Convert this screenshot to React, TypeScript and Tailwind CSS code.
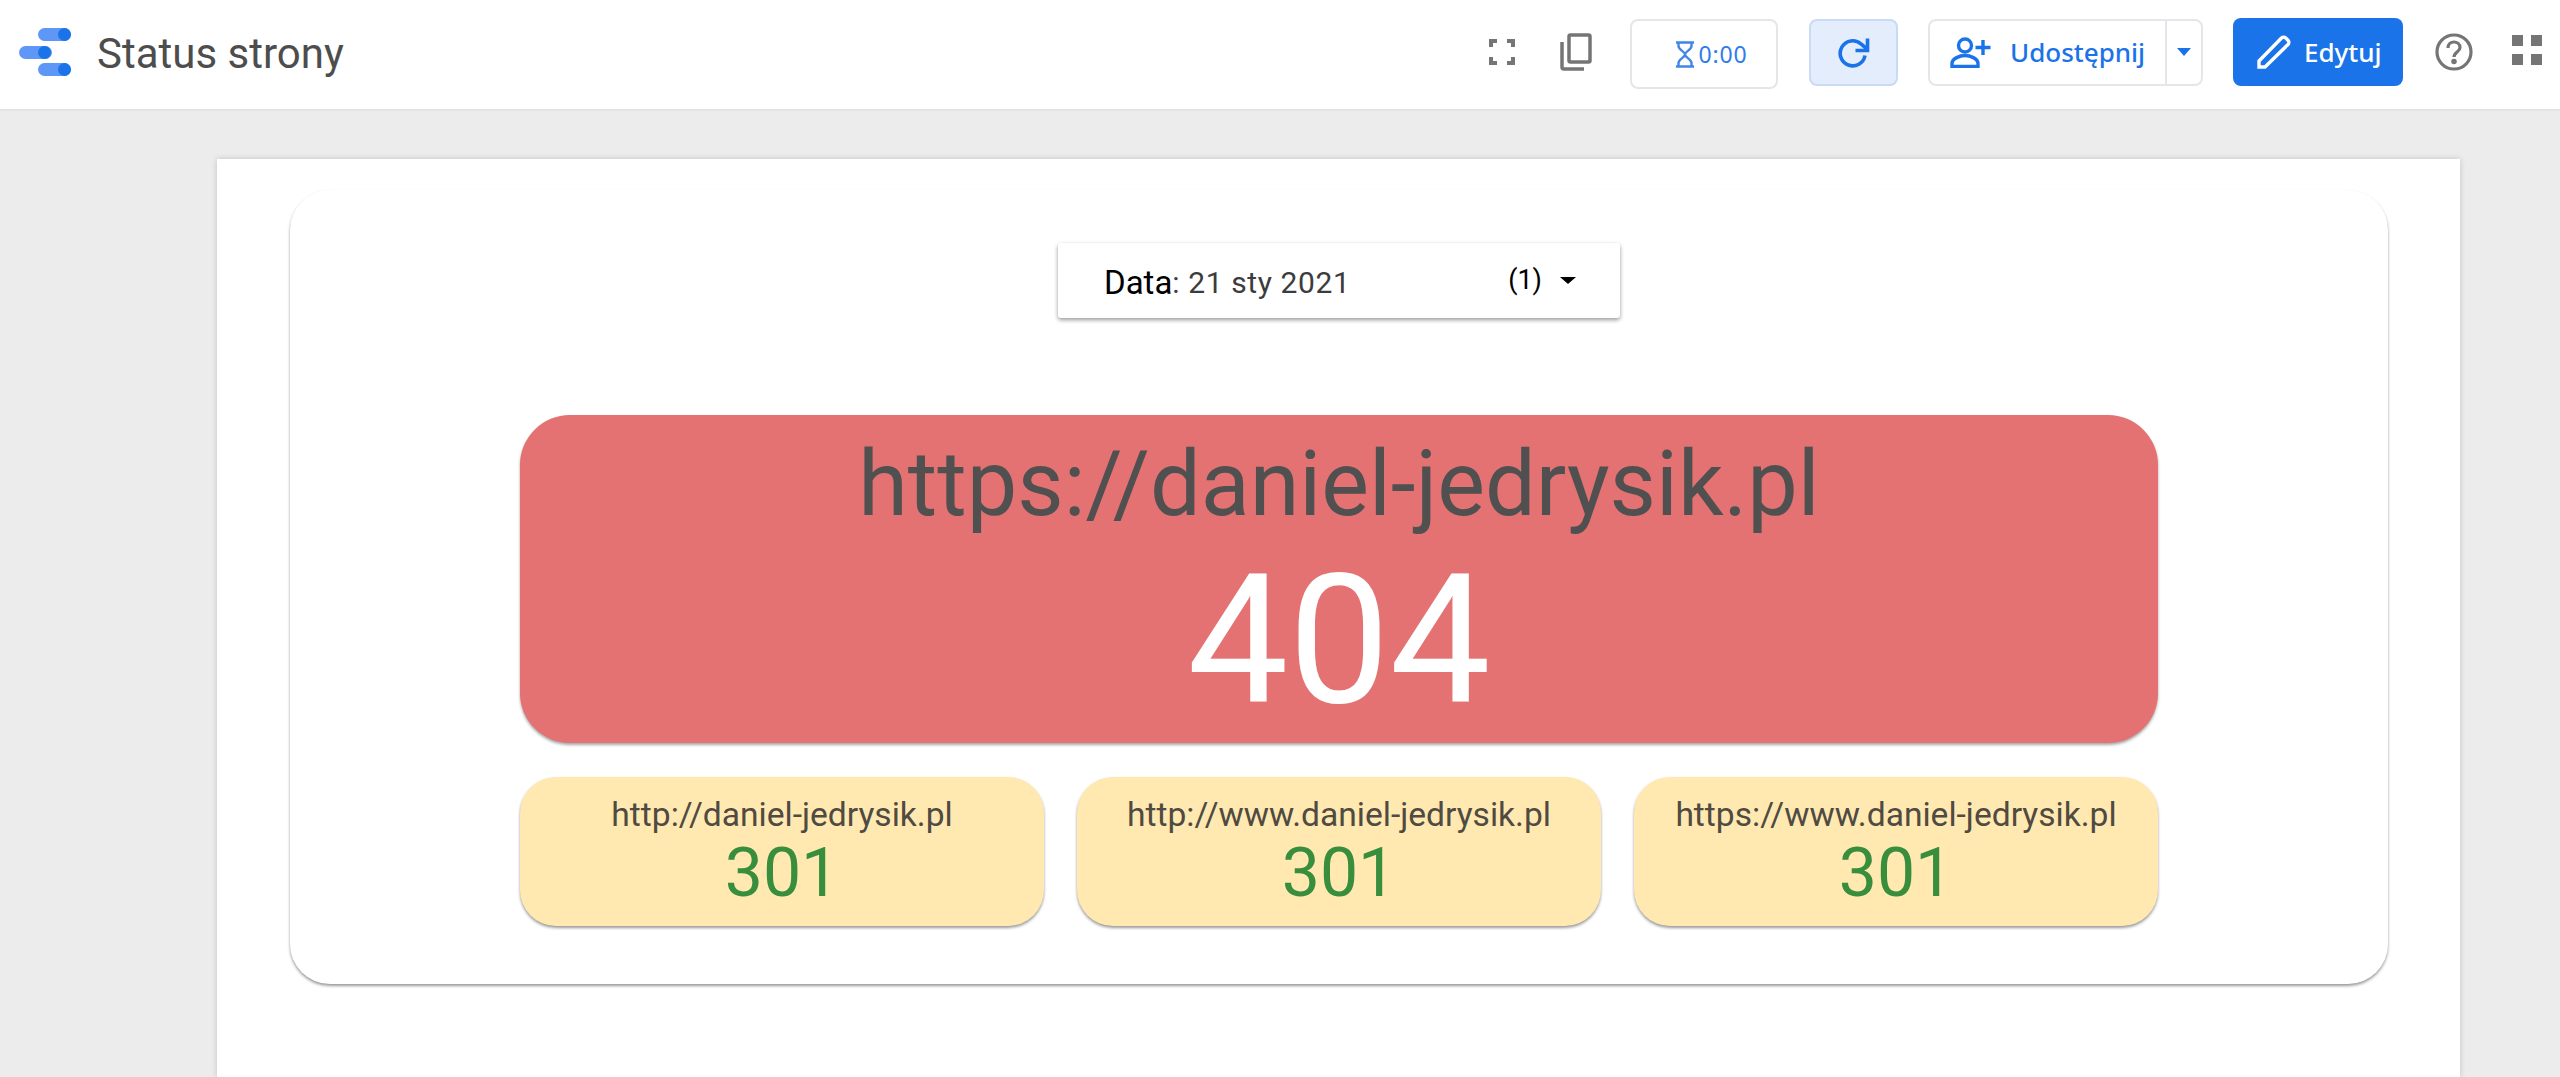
const subSites = [
  "http://daniel-jedrysik.pl",
  "http://www.daniel-jedrysik.pl",
  "https://www.daniel-jedrysik.pl",
];

function Logo() {
  return (
    <svg width="52" height="48" viewBox="0 0 52 48">
      <rect x="19" y="0" width="33" height="13" rx="6.5" fill="#5e97f6" />
      <circle cx="45.5" cy="6.5" r="6.5" fill="#1a73e8" />
      <rect x="0" y="18" width="33" height="13" rx="6.5" fill="#5e97f6" />
      <circle cx="25.5" cy="24.5" r="6.5" fill="#1a73e8" />
      <rect x="19" y="35" width="33" height="13" rx="6.5" fill="#5e97f6" />
      <circle cx="45.5" cy="41.5" r="6.5" fill="#1a73e8" />
    </svg>
  );
}

function TopBar() {
  return (
    <header className="h-[111px] shrink-0 bg-white border-b-2 border-[#e3e3e3] flex items-center pb-[5px] pl-[19px] pr-[18px] font-['Noto_Sans',sans-serif]">
      <Logo />
      <h1 className="ml-[26px] mt-[3px] text-[42px] leading-none text-[#4d4d4d] font-['Roboto',sans-serif]">Status strony</h1>
      <div className="ml-auto flex items-center">
        <svg width="26" height="26" viewBox="0 0 26 26" fill="#757575">
          <path d="M0 0h8v4H4v4H0zM18 0h8v8h-4V4h-4zM0 18h4v4h4v4H0zM22 18h4v8h-8v-4h4z" />
        </svg>
        <svg className="ml-[45px]" width="32" height="38" viewBox="0 0 32 38" fill="none" stroke="#757575" strokeWidth="3.5">
          <rect x="9" y="2" width="21" height="27" rx="1.5" />
          <path d="M2 9v25a2 2 0 0 0 2 2h20" />
        </svg>
        <div className="ml-[38px] mt-[4px] w-[148px] h-[70px] rounded-lg border-2 border-[#e4e6e9] flex items-center justify-center text-[#2f7de9] pl-[14px]">
          <svg width="20" height="27" viewBox="0 0 20 27" fill="none" stroke="#4285e8" strokeWidth="2.4">
            <path d="M1 1.5h18M1 25.5h18M3.5 2v3c0 4 6.5 5.5 6.5 8.5 0-3 6.5-4.5 6.5-8.5V2M3.5 25v-3c0-4 6.5-5.5 6.5-8.5 0 3 6.5 4.5 6.5 8.5v3" />
          </svg>
          <span className="ml-[4px] text-[23px] tracking-[0.8px]">0:00</span>
        </div>
        <div className="ml-[31px] w-[89px] h-[67px] rounded-lg border-2 border-[#c8daf5] bg-[#e4edfb] flex items-center justify-center">
          <svg width="32" height="32" viewBox="0 0 32 32" fill="none" stroke="#1a73e8" strokeWidth="3.6">
            <path d="M27 19.5A12.5 12.5 0 1 1 23 8L29 13" />
            <path d="M29.5 2.500V14.500H17.500" />
          </svg>
        </div>
        <div className="ml-[30px] h-[67px] w-[275px] rounded-lg border-2 border-[#e4e6e9] flex items-center text-[#1a73e8]">
          <div className="flex-1 flex items-center pl-[20px]">
            <svg width="41" height="31" viewBox="0 0 41 31" fill="none" stroke="#1a73e8" strokeWidth="3.4">
              <circle cx="15" cy="8.5" r="6.5" />
              <path d="M2 29.5v-3c0-5 8-8 13-8s13 3 13 8v3z" />
              <path d="M33 3v15M25.5 10.500h15" />
            </svg>
            <span className="ml-[19px] text-[26px] leading-none font-medium">Udostępnij</span>
          </div>
          <div className="w-[36px] h-full border-l-2 border-[#e4e6e9] flex items-center justify-center">
            <div className="w-0 h-0 border-x-[7px] border-x-transparent border-t-[8px] border-t-[#1a73e8]" />
          </div>
        </div>
        <div className="ml-[30px] w-[170px] h-[68px] rounded-lg bg-[#1a73e8] flex items-center pl-[24px] text-white">
          <svg width="34" height="34" viewBox="0 0 34 34" fill="none" stroke="#fff" strokeWidth="3.4">
            <path d="M2 32v-6L24.5 3a3 3 0 0 1 4.2 0l2.3 2.3a3 3 0 0 1 0 4.2L8 32z" />
          </svg>
          <span className="ml-[13px] text-[26px] leading-none font-medium">Edytuj</span>
        </div>
        <svg className="ml-[32px]" width="38" height="38" viewBox="0 0 38 38" fill="none" stroke="#757575" strokeWidth="3.2">
          <circle cx="19" cy="19" r="17" />
          <path d="M13 15c0-4 3-6 6-6s6 2 6 5.5c0 4.5-6 4.5-6 9.5" />
          <circle cx="19" cy="28.5" r="1.2" fill="#757575" />
        </svg>
        <div className="ml-[39px] mb-[4px] grid grid-cols-2 gap-[8px]">
          <div className="w-[11px] h-[11px] bg-[#757575]" />
          <div className="w-[11px] h-[11px] bg-[#757575]" />
          <div className="w-[11px] h-[11px] bg-[#757575]" />
          <div className="w-[11px] h-[11px] bg-[#757575]" />
        </div>
      </div>
    </header>
  );
}

export default function App() {
  return (
    <div className="h-[1077px] w-[2560px] overflow-hidden flex flex-col bg-[#ececec] font-['Roboto',sans-serif]">
      <TopBar />
      <main className="ml-[217px] mt-[48px] w-[2243px] flex-1 bg-white shadow-[0_0_6px_rgba(0,0,0,0.18)] pl-[73px] pt-[31px]">
        <section className="w-[2098px] h-[794px] rounded-[40px] bg-white shadow-[0_2px_3px_rgba(0,0,0,0.4)] flex flex-col items-center">
          <div className="mt-[53px] w-[562px] h-[75px] rounded-[3px] bg-white shadow-[0_2px_4px_rgba(0,0,0,0.4)] flex items-center pl-[46px] pr-[44px]">
            <span className="text-black text-[33px] leading-none mt-[4px]">Data</span>
            <span className="text-[#3c3c3c] text-[30px] leading-none mt-[4px] tracking-[0.6px]">: 21 sty 2021</span>
            <span className="ml-auto text-[27px] text-black leading-none">(1)</span>
            <div className="ml-[18px] w-0 h-0 border-x-[8px] border-x-transparent border-t-[7px] border-t-black" />
          </div>

          <div className="mt-[97px] w-[1638px] h-[328px] rounded-[50px] bg-[#e47272] shadow-[0_2px_3px_rgba(0,0,0,0.35)] flex flex-col items-center text-center">
            <div className="mt-[20px] text-[90px] leading-[100px] text-[#505050]">https://daniel-jedrysik.pl</div>
            <div className="mt-[16px] text-[180px] leading-[180px] text-white">404</div>
          </div>

          <div className="mt-[34px] w-[1638px] grid grid-cols-3 gap-[33px]">
            {subSites.map((site) => (
              <div key={site} className="h-[149px] rounded-[36px] bg-[#ffe9b0] shadow-[0_2px_3px_rgba(0,0,0,0.4)] flex flex-col items-center">
                <div className="mt-[13px] text-[33.6px] leading-[50px] text-[#4f4a42]">{site}</div>
                <div className="text-[68px] leading-[66px] text-[#388e3c]">301</div>
              </div>
            ))}
          </div>
        </section>
      </main>
    </div>
  );
}
